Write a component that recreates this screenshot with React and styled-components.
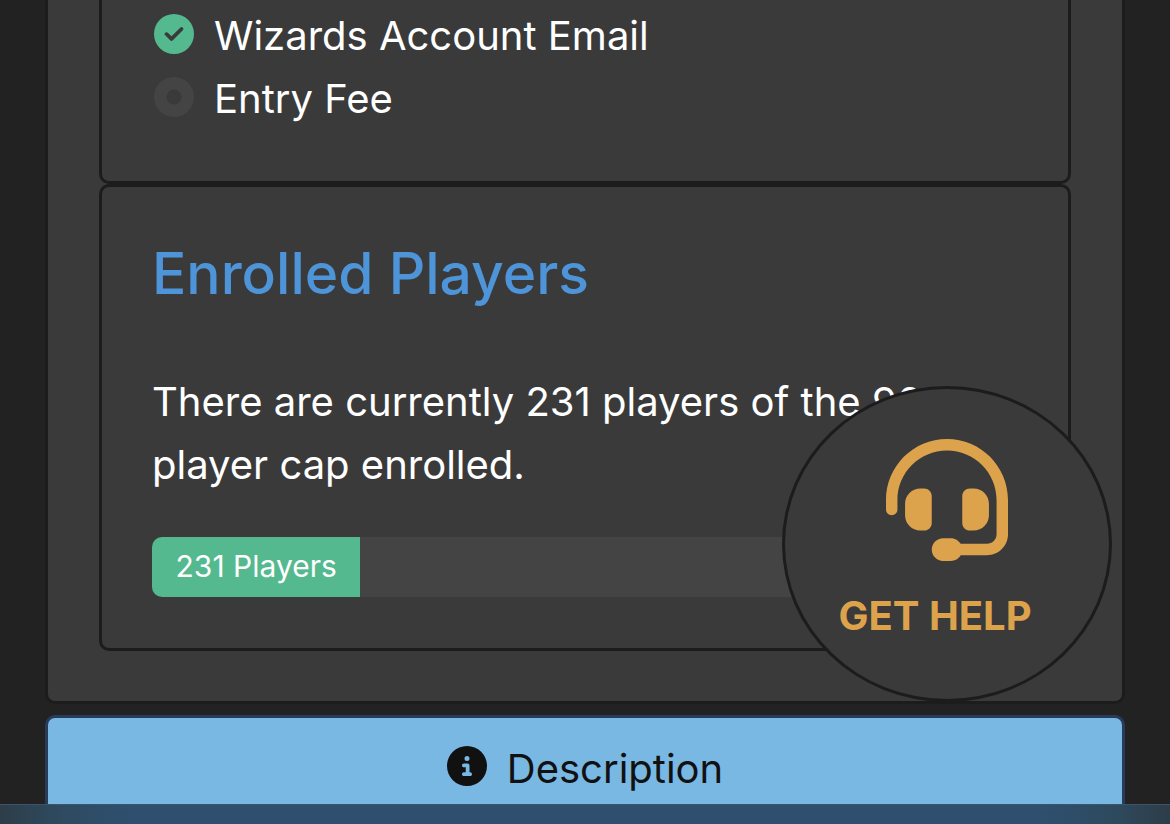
import React from 'react'
import styled, { createGlobalStyle } from 'styled-components'
import {
  FaCircleCheck,
  FaCircleDot,
  FaCircleInfo,
  FaHeadset,
} from 'react-icons/fa6'

const GlobalStyle = createGlobalStyle`
  *,
  *::before,
  *::after {
    box-sizing: border-box;
  }

  body {
    margin: 0;
    background: #222222;
    color: #ffffff;
    font-family: Inter, 'Liberation Sans', sans-serif;
    font-size: 40px;
    line-height: 63px;
  }

  button {
    font: inherit;
    cursor: pointer;
  }
`

const Page = styled.main`
  display: flex;
  flex-direction: column;
  gap: 11px;
  padding: 0 45px;
`

const Card = styled.section`
  padding: 0 51px 50px;
  background: #3a3a3a;
  border: 3px solid #1c1c1c;
  border-top: none;
  border-radius: 0 0 10px 10px;
`

const Panel = styled.section`
  padding: 50px 50px 51px;
  border: 3px solid #1c1c1c;
  border-radius: 10px;
`

const RequirementsPanel = styled(Panel)`
  padding-top: 4px;
  border-top: none;
  border-radius: 0 0 10px 10px;
`

const Requirements = styled.ul`
  margin: 0;
  padding: 0;
  list-style: none;
`

const Requirement = styled.li`
  display: flex;
  align-items: center;
  gap: 20px;

  svg {
    flex: none;
    width: 40px;
    height: 40px;
    margin: 0 0 4px 2px;
    color: ${props => (props.$done ? '#54b98f' : '#444444')};
  }
`

const Title = styled.h2`
  margin: 0 0 60px;
  color: #4d94d8;
  font-size: 57px;
  font-weight: 500;
  line-height: 73px;
`

const Text = styled.p`
  margin: 0 0 41px;
`

const Progress = styled.div`
  height: 60px;
  overflow: hidden;
  background: #444444;
  border-radius: 10px;
`

const ProgressBar = styled.div`
  height: 100%;
  background: #54b98f;
  font-size: 30px;
  line-height: 58px;
  text-align: center;
  white-space: nowrap;
`

const DescriptionButton = styled.button`
  display: flex;
  align-items: center;
  justify-content: center;
  gap: 20px;
  width: 100%;
  padding: 19px 50px;
  background: #7ab8e4;
  border: 3px solid #283c5a;
  border-radius: 10px;
  color: #111111;

  svg {
    width: 40px;
    height: 40px;
    margin-bottom: 6px;
  }
`

const HelpButton = styled.button`
  position: fixed;
  right: 58px;
  bottom: 122px;
  display: flex;
  flex-direction: column;
  align-items: center;
  gap: 23px;
  width: 330px;
  height: 316px;
  padding: 50px 0 0;
  background: #3a3a3a;
  border: 3px solid #1c1c1c;
  border-radius: 50%;
  color: #dca34c;
  font-weight: 700;

  svg {
    width: 122px;
    height: 122px;
  }
`

const HelpLabel = styled.span`
  padding-right: 24px;
`

const BottomBar = styled.div`
  position: fixed;
  right: 0;
  bottom: 0;
  left: 0;
  height: 20px;
  background: linear-gradient(
    to right,
    #2e3d48,
    #2e4a60 60px,
    #2e4f6e 130px,
    #2e4f6e calc(100% - 130px),
    #2e4a60 calc(100% - 60px),
    #2e3d48
  );
  border-top: 1px solid #3a556b;
`

const EnrolledPlayers = ({ enrolled, cap }) => (
  <Panel>
    <Title>Enrolled Players</Title>
    <Text>
      There are currently {enrolled} players of the {cap} player cap enrolled.
    </Text>
    <Progress
      role="progressbar"
      aria-label="Enrolled Players"
      aria-valuenow={enrolled}
      aria-valuemin={0}
      aria-valuemax={cap}
    >
      <ProgressBar style={{ width: `${(enrolled / cap) * 100}%` }}>
        {enrolled} Players
      </ProgressBar>
    </Progress>
  </Panel>
)

const App = () => (
  <>
    <GlobalStyle />
    <Page>
      <Card>
        <RequirementsPanel>
          <Requirements>
            <Requirement $done>
              <FaCircleCheck />
              Wizards Account Email
            </Requirement>
            <Requirement>
              <FaCircleDot />
              Entry Fee
            </Requirement>
          </Requirements>
        </RequirementsPanel>
        <EnrolledPlayers enrolled={231} cap={960} />
      </Card>
      <DescriptionButton type="button">
        <FaCircleInfo />
        Description
      </DescriptionButton>
    </Page>
    <HelpButton type="button">
      <FaHeadset />
      <HelpLabel>GET HELP</HelpLabel>
    </HelpButton>
    <BottomBar />
  </>
)

export default App
